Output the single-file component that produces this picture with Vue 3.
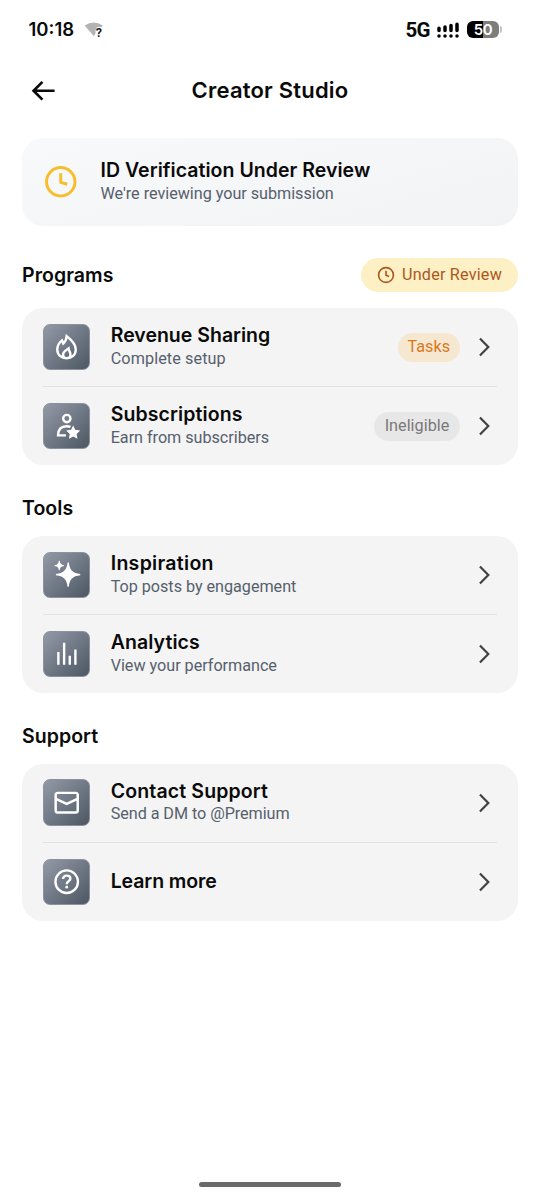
<script setup>
const sections = [
  {
    title: 'Programs',
    status: 'Under Review',
    rows: [
      { icon: 'flame', title: 'Revenue Sharing', sub: 'Complete setup', tag: 'Tasks', tone: 'warm' },
      { icon: 'person', title: 'Subscriptions', sub: 'Earn from subscribers', tag: 'Ineligible', tone: 'muted' },
    ],
  },
  {
    title: 'Tools',
    rows: [
      { icon: 'spark', title: 'Inspiration', sub: 'Top posts by engagement' },
      { icon: 'bars', title: 'Analytics', sub: 'View your performance' },
    ],
  },
  {
    title: 'Support',
    rows: [
      { icon: 'mail', title: 'Contact Support', sub: 'Send a DM to @Premium' },
      { icon: 'help', title: 'Learn more' },
    ],
  },
]
</script>

<template>
  <div class="screen">
    <div class="statusbar">
      <span class="time">10:18</span>
      <svg class="wifi" viewBox="0 0 20 18">
        <path d="M.6 4.6Q9.5-1.8 18.8 4.6L17.6 6H14Q11 7 11.6 12L10 15.2z" fill="#b3b3b3" />
        <text x="11.8" y="15.6" class="wifi-q">?</text>
      </svg>
      <span class="net">5G</span>
      <svg class="signal" viewBox="0 0 22 16">
        <g stroke="#000" stroke-width="3.5" stroke-linecap="round">
          <path d="M2 6.2V8.6M8 5V8.6M14 3.6V8.6M20 2.2V8.6M2 14v.01M8 14v.01M14 14v.01M20 14v.01" />
        </g>
      </svg>
      <div class="battery"><span>50</span></div>
      <i class="nub"></i>
    </div>

    <header class="topbar">
      <svg class="back" viewBox="0 0 24 24">
        <path d="M7.414 13l5.043 5.04-1.414 1.42L3.586 12l7.457-7.46 1.414 1.42L7.414 11H21v2H7.414z" />
      </svg>
      <h1>Creator Studio</h1>
    </header>

    <div class="banner">
      <svg class="clock" viewBox="0 0 24 24" fill="none" stroke="currentColor" stroke-width="1.9">
        <circle cx="12" cy="12" r="9.1" />
        <path d="M12 6.6V12.4L16.2 13.6" stroke-linejoin="round" />
      </svg>
      <div class="copy">
        <div class="title t-banner">ID Verification Under Review</div>
        <div class="sub">We're reviewing your submission</div>
      </div>
    </div>

    <section v-for="s in sections" :key="s.title" :class="s.title.toLowerCase()">
      <div class="heading">
        <h2>{{ s.title }}</h2>
        <div v-if="s.status" class="status">
          <svg viewBox="0 0 24 24" fill="none" stroke="currentColor" stroke-width="2.2">
            <circle cx="12" cy="12" r="9.9" />
            <path d="M12 6.4V12.4L16.2 14" />
          </svg>
          <span>{{ s.status }}</span>
        </div>
      </div>
      <div class="card">
        <div v-for="r in s.rows" :key="r.title" class="row">
          <div class="tile">
            <svg viewBox="0 0 24 24" fill="none" stroke="#fff" stroke-width="1.95">
              <template v-if="r.icon === 'flame'">
                <path d="M12 3.4C15.6 6.2 19.4 9.8 19.4 14.3C19.4 18.7 16.2 21.4 11.9 21.4S4.3 18.7 4.3 14.3C4.3 11.4 5.8 8.9 8.2 6.9L9.2 9.4C10.8 8 11.8 6 12 3.4Z" />
                <path d="M10 21.1C7.4 17.6 10.2 15.6 13.5 13.5C13.5 15.5 16.9 18 14 21.1" />
              </template>
              <template v-else-if="r.icon === 'person'">
                <circle cx="12.1" cy="6.2" r="3" />
                <path d="M11.4 19.9H4.9C5 15 7.6 12.4 12 12.4C13.2 12.4 14.2 12.6 15.1 13" />
                <path d="M17.3 11.8l1.7 3.6 4 .5-2.9 2.8.7 4-3.5-1.9-3.5 1.9.7-4-2.9-2.8 4-.5z" fill="#fff" stroke="none" />
              </template>
              <g v-else-if="r.icon === 'spark'" fill="#fff" stroke="none">
                <path d="M12.7 2H13.8C14.3 8 17 10.8 23.1 11.4V12.5C17 13.1 14.3 15.9 13.7 21.9H12.7C12.1 15.9 9.3 13.1 3.2 12.5V11.4C9.3 10.8 12.1 8 12.7 2Z" />
                <path d="M5.6.7H6.3C6.5 3 7.4 4 9.8 4.2V4.9C7.4 5.1 6.5 6.1 6.3 8.4H5.6C5.4 6.1 4.5 5.1 2.1 4.9V4.2C4.5 4 5.4 3 5.6.7Z" />
              </g>
              <path v-else-if="r.icon === 'bars'" d="M5.2 21V10.6M9.9 21V3M14.5 21V13.6M19.1 21V8.5" />
              <path v-else-if="r.icon === 'mail'" fill="#fff" stroke="none" d="M1.998 5.5c0-1.381 1.119-2.5 2.5-2.5h15c1.381 0 2.5 1.119 2.5 2.5v13c0 1.381-1.119 2.5-2.5 2.5h-15c-1.381 0-2.5-1.119-2.5-2.5v-13zm2.5-.5c-.276 0-.5.224-.5.5v2.764l8 3.638 8-3.636V5.5c0-.276-.224-.5-.5-.5h-15zm15.5 5.463l-8 3.636-8-3.638V18.5c0 .276.224.5.5.5h15c.276 0 .5-.224.5-.5v-8.037z" />
              <template v-else>
                <circle cx="12" cy="12" r="9.2" />
                <path d="M9 9.8C9.1 8 10.3 7 12.1 7C13.9 7 15 8 15 9.4C15 11.8 12 11.5 12 14" />
                <circle cx="12" cy="16.4" r="1.25" fill="#fff" stroke="none" />
              </template>
            </svg>
          </div>
          <div class="copy">
            <div class="title" :class="'t-' + r.icon">{{ r.title }}</div>
            <div v-if="r.sub" class="sub" :class="'s-' + r.icon">{{ r.sub }}</div>
          </div>
          <span v-if="r.tag" class="tag" :class="r.tone">{{ r.tag }}</span>
          <svg class="chev" viewBox="0 0 24 24">
            <path d="M14.586 12L7.543 4.96l1.42-1.42L17.414 12l-8.45 8.46-1.42-1.42L14.586 12z" />
          </svg>
        </div>
      </div>
    </section>
    <div class="home"></div>
  </div>
</template>

<style>
body { background: #fff; }
</style>

<style scoped>
.screen {
  box-sizing: border-box;
  width: 540px;
  height: 1200px;
  padding: 0 22px;
  display: flex;
  flex-direction: column;
  background: #fff;
  color: #0a0a0a;
  font-family: Inter, Roboto, sans-serif;
}
.statusbar { height: 59px; display: flex; align-items: center; padding: 0 16px 0 6.5px; flex: none; }
.time { font-size: 18.5px; line-height: 22px; font-weight: 600; width: 55.5px; white-space: nowrap; padding-bottom: 1px; }
.wifi { width: 20px; height: 18px; }
.wifi-q { font: 700 12.5px Roboto, sans-serif; fill: #222; }
.net { margin-left: auto; font: 700 20.5px Roboto, sans-serif; letter-spacing: -0.6px; }
.signal { width: 22px; height: 16px; margin-left: 6.5px; }
.battery {
  width: 32px; height: 17px; margin-left: 8.5px; border-radius: 6px;
  background: linear-gradient(90deg, #000 50%, #7d7d7d 50%);
  color: #fff; font: 600 15px/17px Inter, sans-serif; text-align: center; letter-spacing: -0.4px;
}
.nub { width: 2px; height: 7px; margin-left: 1px; border-radius: 0 2px 2px 0; background: #c4c4c4; }
.topbar { height: 63px; display: flex; align-items: center; flex: none; }
.back { width: 31.5px; height: 31.5px; margin-left: 5.4px; fill: #0a0a0a; }
h1 { margin: 0 36.9px 0 0; padding-bottom: 1px; flex: 1; text-align: center; font-size: 22px; line-height: 28px; font-weight: 600; letter-spacing: 0.2px; }
.banner {
  margin-top: 16px; height: 88px; flex: none; display: flex; align-items: center;
  border-radius: 21px; background: linear-gradient(165deg, #f8f9fa, #f2f3f5);
}
.clock { width: 37.5px; height: 37.5px; margin-left: 20.2px; color: #f7bd2b; }
.banner .copy { margin-left: 20.8px; }
.copy { flex: 1; min-width: 0; padding-bottom: 2px; }
.title { font-size: 19.5px; line-height: 24px; font-weight: 600; white-space: nowrap; }
.t-banner { letter-spacing: 0.04px; }
.t-person { letter-spacing: 0.1px; }
.t-spark { letter-spacing: 0.3px; }
.t-bars { letter-spacing: 0.08px; }
.t-mail { letter-spacing: 0.14px; }
.t-help { letter-spacing: -0.1px; padding-top: 1px; }
.sub { position: relative; top: 0.8px; font-family: Roboto, sans-serif; font-size: 16.2px; line-height: 22px; letter-spacing: -0.03px; color: #56606d; white-space: nowrap; }
.s-flame { letter-spacing: 0.1px; }
.s-mail { top: 0; letter-spacing: -0.06px; }
.heading { display: flex; align-items: center; justify-content: space-between; }
.programs .heading { height: 34px; margin: 32px 0 16px; }
.tools .heading, .support .heading { height: 24px; }
.tools .heading { margin: 31px 0 15.5px; }
.support .heading { margin: 31px 0 15.6px; }
h2 { margin: 0; font-size: 19.5px; line-height: 24px; font-weight: 600; letter-spacing: 0.05px; }
.programs h2 { padding-bottom: 1px; }
.status {
  box-sizing: border-box; width: 157px; height: 34px; padding: 0 16px; border-radius: 17px;
  display: flex; align-items: center; justify-content: space-between;
  background: #fcf0c4; color: #ad5720; font: 16.2px/22px Roboto, sans-serif; letter-spacing: 0.2px; white-space: nowrap;
}
.status span { padding-bottom: 1px; }
.status svg { width: 18px; height: 18px; }
.card { height: 157.3px; border-radius: 21px; background: #f4f4f4; padding: 0 21px; box-sizing: border-box; }
.row { box-sizing: border-box; height: 78px; display: flex; align-items: center; }
.row + .row { height: 79.3px; border-top: 1.3px solid #e1e2e3; }
.tile {
  box-sizing: border-box; width: 46.5px; height: 46.5px; margin-right: 21.2px; border-radius: 7px;
  border: 1px solid #8d939c; display: flex; align-items: center; justify-content: center;
  background: linear-gradient(135deg, #929aa6, #4d5764);
}
.tile svg { width: 29.4px; height: 29.4px; flex: none; }
.tag { height: 29px; box-sizing: border-box; border-radius: 15px; text-align: center; font: 16.2px/28px Roboto, sans-serif; letter-spacing: 0.02px; }
.warm { width: 62.5px; background: #f6e7d1; color: #d9791d; }
.muted { width: 86px; background: #e7e7e7; color: #797979; }
.chev { width: 26px; height: 26px; margin: 0 0 0 11px; fill: #404244; }
.home { width: 142px; height: 5px; border-radius: 3px; background: #6a6a6a; margin: auto auto 13px; }
</style>
